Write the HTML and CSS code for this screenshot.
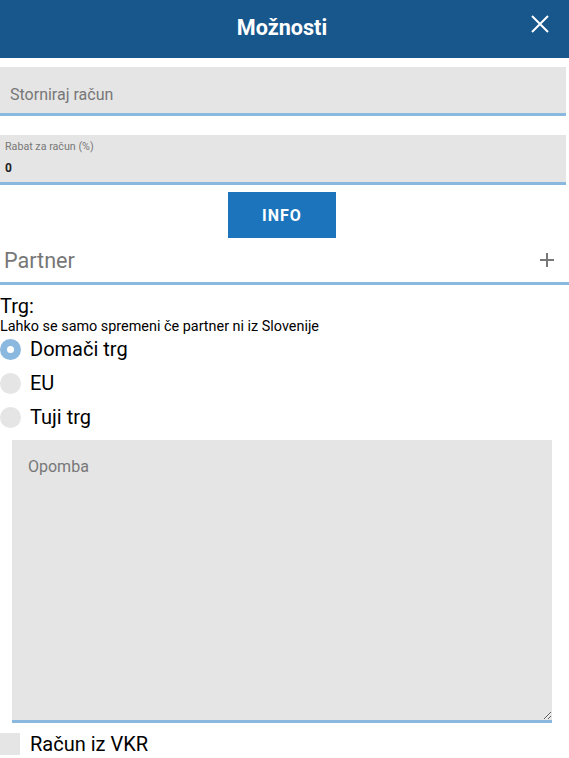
FILE: index.html
```html
<!DOCTYPE html>
<html lang="sl">
<head>
    <meta charset="UTF-8">
    <meta name="viewport" content="width=device-width, initial-scale=1.0">
    <title>Možnosti</title>
    <link rel="stylesheet" href="styles.css">
</head>
<body>

    <div class="header">
        <h1>Možnosti</h1>
        <svg class="close" width="18" height="18" viewBox="0 0 18 18">
            <path d="M1 1 L17 17 M17 1 L1 17" stroke="#fff" stroke-width="2" fill="none"/>
        </svg>
    </div>

    <div class="field first">
        <span class="placeholder">Storniraj račun</span>
    </div>

    <div class="field rabat">
        <div class="label">Rabat za račun (%)</div>
        <div class="value">0</div>
    </div>

    <div class="actions">
        <button class="info-button">INFO</button>
    </div>

    <div class="partner">
        <span>Partner</span>
        <svg width="14" height="14" viewBox="0 0 14 14">
            <path d="M7 0 V14 M0 7 H14" stroke="#777" stroke-width="2" fill="none"/>
        </svg>
    </div>

    <div class="trg">Trg:</div>
    <div class="trg-note">Lahko se samo spremeni če partner ni iz Slovenije</div>

    <div class="radios">
        <div class="radio-row">
            <span class="radio checked"></span>
            <span>Domači trg</span>
        </div>
        <div class="radio-row">
            <span class="radio"></span>
            <span>EU</span>
        </div>
        <div class="radio-row">
            <span class="radio"></span>
            <span>Tuji trg</span>
        </div>
    </div>

    <textarea class="note" placeholder="Opomba"></textarea>

    <div class="check-row">
        <span class="checkbox"></span>
        <span>Račun iz VKR</span>
    </div>

</body>
</html>
```

FILE: styles.css
```css
body {
    margin: 0;
    font-family: Roboto, "Liberation Sans", sans-serif;
    color: #000;
    background: #fff;
}
.header {
    position: relative;
    height: 58px;
    background-color: #17578b;
    display: flex;
    align-items: center;
    justify-content: center;
}
.header h1 {
    margin: 0 5px 0 0;
    color: #fff;
    font-size: 21.6px;
    font-weight: bold;
    padding-bottom: 4px;
}
.close {
    position: absolute;
    right: 20px;
    top: 15px;
}
.field {
    background-color: #e5e5e5;
    border-bottom: 3px solid #8ab8df;
    margin-right: 3px;
    box-sizing: border-box;
}
.field.first {
    margin-top: 9px;
    height: 49px;
    padding: 18px 10px 0;
}
.placeholder {
    font-size: 16px;
    line-height: 20px;
    color: #777;
}
.field.rabat {
    margin-top: 19px;
    height: 50px;
    padding: 5px 5px 0;
}
.label {
    font-size: 10.7px;
    line-height: 13px;
    color: #777;
}
.value {
    margin-top: 8px;
    font-size: 12px;
    line-height: 14px;
    font-weight: bold;
    color: #222;
}
.actions {
    display: flex;
    justify-content: center;
    margin: 7px 5px 0 0;
}
.info-button {
    width: 108px;
    height: 46px;
    border: none;
    background-color: #1c75bc;
    color: #fff;
    font-family: Roboto, "Liberation Sans", sans-serif;
    font-size: 16px;
    font-weight: bold;
    letter-spacing: 1px;
}
.partner {
    height: 44px;
    display: flex;
    align-items: center;
    justify-content: space-between;
    padding: 0 15px 0 4px;
    border-bottom: 3px solid #8ab8df;
    font-size: 21.6px;
    color: #777;
}
.trg {
    margin-top: 10px;
    font-size: 20px;
    line-height: 22px;
}
.trg-note {
    margin-top: 2px;
    font-size: 14.4px;
    line-height: 16px;
}
.radios {
    margin-top: -3px;
}
.radio-row {
    display: flex;
    align-items: center;
    gap: 9px;
    height: 34px;
    font-size: 20px;
}
.radio {
    width: 21px;
    height: 21px;
    border-radius: 50%;
    background-color: #e5e5e5;
    box-sizing: border-box;
}
.radio.checked {
    background-color: #fff;
    border: 7px solid #8ab8df;
}
.note {
    display: block;
    margin: 6px 0 0 12px;
    width: 540px;
    height: 283px;
    box-sizing: border-box;
    border: none;
    border-bottom: 3px solid #8ab8df;
    background-color: #e5e5e5;
    padding: 17px 16px;
    font-family: Roboto, "Liberation Sans", sans-serif;
    font-size: 16px;
    line-height: 20px;
    outline: none;
}
.note::placeholder {
    color: #777;
}
.check-row {
    display: flex;
    align-items: center;
    gap: 10px;
    margin-top: 9px;
    font-size: 20px;
}
.checkbox {
    width: 20px;
    height: 22px;
    background-color: #e5e5e5;
}
```
